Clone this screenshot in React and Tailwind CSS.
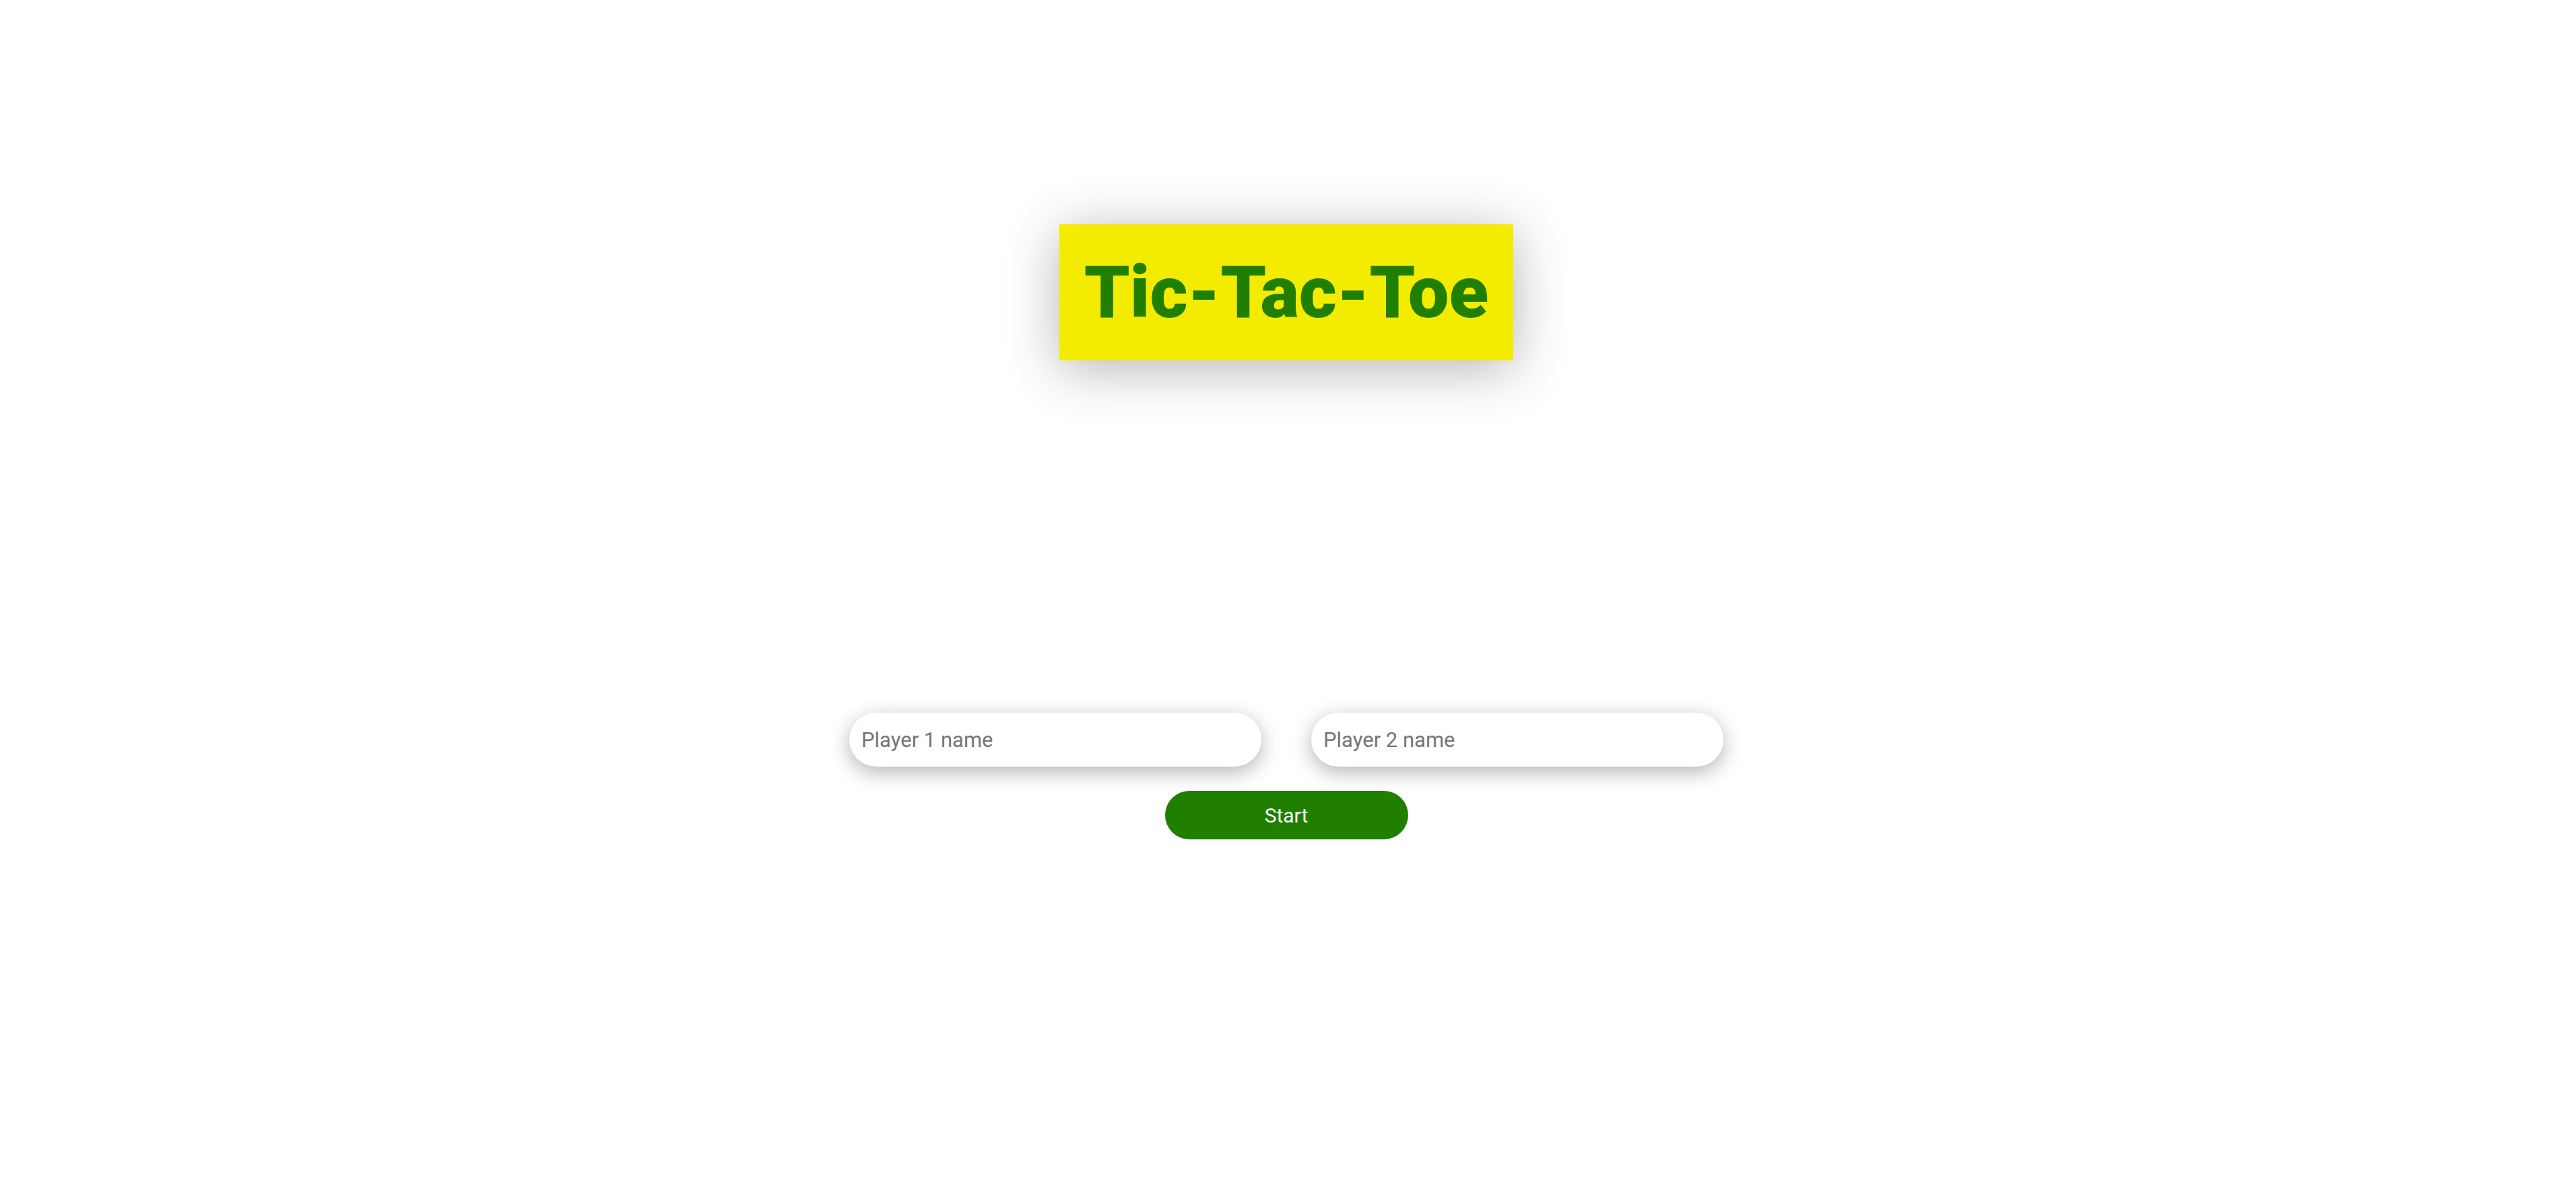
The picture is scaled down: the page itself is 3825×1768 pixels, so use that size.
export default function App() {
  return (
    <div className="min-h-screen bg-white flex flex-col items-center pt-[333px] pr-[5px]" style={{ fontFamily: 'Roboto, "Liberation Sans", sans-serif' }}>
      <h1 className="bg-[#f3ec00] text-[#217f00] font-black text-[108px] leading-none whitespace-nowrap h-[202px] w-[674px] flex items-center justify-center shadow-[0_12px_80px_rgba(0,0,0,0.3)]">
        Tic-Tac-Toe
      </h1>

      <div className="mt-[523px] flex gap-[74px]">
        <input
          placeholder="Player 1 name"
          className="w-[612px] h-[80px] rounded-full bg-white px-[18px] text-[31px] text-[#333] placeholder:text-[#757575] outline-none shadow-[0_8px_30px_rgba(0,0,0,0.3)]"
        />
        <input
          placeholder="Player 2 name"
          className="w-[612px] h-[80px] rounded-full bg-white px-[18px] text-[31px] text-[#333] placeholder:text-[#757575] outline-none shadow-[0_8px_30px_rgba(0,0,0,0.3)]"
        />
      </div>

      <button className="mt-[36px] w-[361px] h-[72px] rounded-full bg-[#217f00] text-white text-[30px]">
        Start
      </button>
    </div>
  )
}
